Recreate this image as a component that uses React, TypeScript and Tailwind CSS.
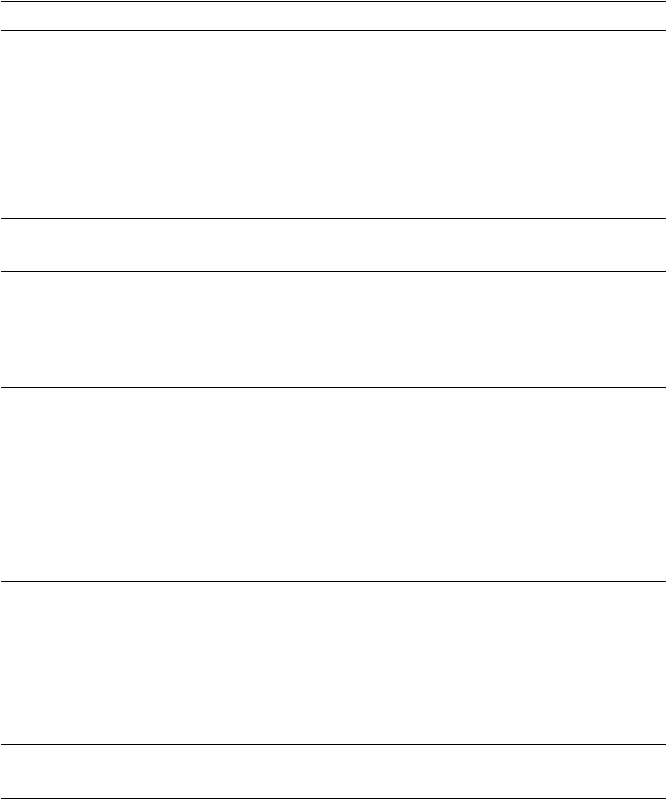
export default function App() {
  const rows = [29, 188, 53, 116, 194, 163, 54];
  return (
    <div className="w-[667px] h-[799px] bg-white px-[1px] pt-[1px]">
      <div className="border-t border-black">
        {rows.map((h, i) => (
          <div key={i} className="border-b border-black" style={{ height: h }} />
        ))}
      </div>
    </div>
  );
}
